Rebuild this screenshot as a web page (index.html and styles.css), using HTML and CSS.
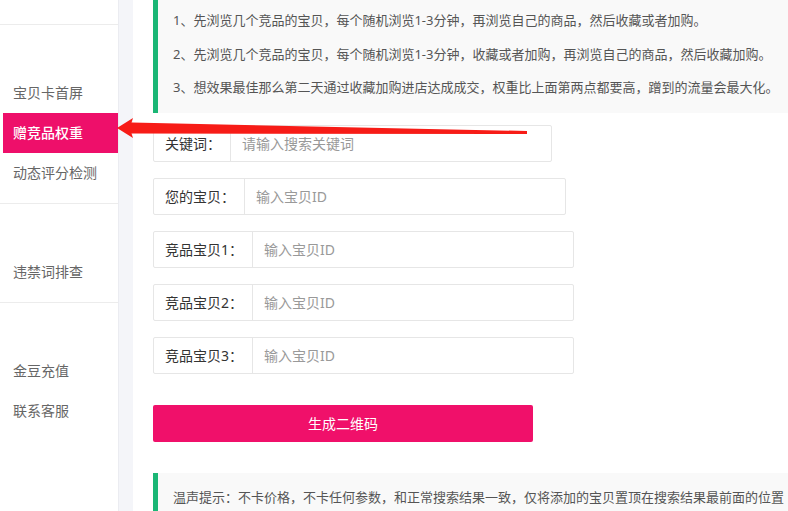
FILE: index.html
```html
<!DOCTYPE html>
<html lang="zh-CN">
<head>
<meta charset="utf-8">
<title>赠竞品权重</title>
<link rel="stylesheet" href="styles.css">
</head>
<body>
<div class="page">
  <aside class="sidebar">
    <div class="group group-top"></div>
    <div class="group">
      <div class="item">宝贝卡首屏</div>
      <div class="item active">赠竞品权重</div>
      <div class="item">动态评分检测</div>
    </div>
    <div class="group">
      <div class="item">违禁词排查</div>
    </div>
    <div class="group last">
      <div class="item">金豆充值</div>
      <div class="item">联系客服</div>
    </div>
  </aside>
  <div class="gutter"></div>
  <main class="main">
    <div class="notice">
      <p>1、先浏览几个竞品的宝贝，每个随机浏览1-3分钟，再浏览自己的商品，然后收藏或者加购。</p>
      <p>2、先浏览几个竞品的宝贝，每个随机浏览1-3分钟，收藏或者加购，再浏览自己的商品，然后收藏加购。</p>
      <p>3、想效果最佳那么第二天通过收藏加购进店达成成交，权重比上面第两点都要高，蹭到的流量会最大化。</p>
    </div>
    <form class="form">
      <div class="row"><span class="label">关键词：</span><input class="input" type="text" placeholder="请输入搜索关键词"></div>
      <div class="row"><span class="label">您的宝贝：</span><input class="input" type="text" placeholder="输入宝贝ID"></div>
      <div class="row"><span class="label">竞品宝贝1：</span><input class="input" type="text" placeholder="输入宝贝ID"></div>
      <div class="row"><span class="label">竞品宝贝2：</span><input class="input" type="text" placeholder="输入宝贝ID"></div>
      <div class="row"><span class="label">竞品宝贝3：</span><input class="input" type="text" placeholder="输入宝贝ID"></div>
      <button class="btn" type="button">生成二维码</button>
    </form>
    <div class="notice tip">
      <p>温声提示：不卡价格，不卡任何参数，和正常搜索结果一致，仅将添加的宝贝置顶在搜索结果最前面的位置</p>
    </div>
  </main>
  <svg class="arrow" width="788" height="511" viewBox="0 0 788 511" aria-hidden="true">
    <polygon points="117,128 133,118 131.5,122.5 527,131 527,134 131.5,133.5 133,138" fill="#f71c17"/>
  </svg>
</div>
</body>
</html>
```

FILE: styles.css
```css
* { box-sizing: border-box; }
html, body {
  margin: 0;
  padding: 0;
  background: #fff;
  font-family: "Noto Sans", "Noto Sans CJK SC", sans-serif;
}
.page {
  position: relative;
  display: flex;
  width: 788px;
  height: 511px;
  overflow: hidden;
}
.sidebar {
  width: 119px;
  flex: none;
  background: #fff;
  border-right: 1px solid #ebecf1;
}
.group {
  padding: 48px 0 10px;
  border-bottom: 1px solid #ececec;
}
.group-top {
  height: 25px;
  padding: 0;
}
.group.last { border-bottom: none; }
.item {
  height: 40px;
  line-height: 40px;
  padding-left: 13px;
  font-size: 14px;
  color: #666;
  white-space: nowrap;
}
.item.active {
  margin-left: 3px;
  padding-left: 10px;
  background: #ee0f6a;
  color: #fff;
  font-weight: 500;
}
.gutter {
  width: 14px;
  flex: none;
  background: #f4f5f9;
}
.main {
  flex: 1;
  min-width: 0;
  padding-left: 20px;
  overflow: hidden;
}
.notice {
  background: #f9f9f9;
  border-left: 5px solid #1ab675;
  padding: 4px 0 8px 15px;
  white-space: nowrap;
}
.notice p {
  margin: 0;
  line-height: 33.5px;
  font-size: 13px;
  color: #555;
}
.form {
  display: flex;
  flex-direction: column;
  align-items: flex-start;
  gap: 16px;
  padding-top: 12px;
}
.row {
  display: flex;
  height: 37px;
  border: 1px solid #e6e6e6;
  border-radius: 2px;
  background: #fff;
}
.label {
  display: flex;
  align-items: center;
  padding: 0 9px 0 11px;
  border-right: 1px solid #e6e6e6;
  font-size: 14px;
  color: #333;
  white-space: nowrap;
}
.input {
  width: 320px;
  border: none;
  outline: none;
  padding: 0 11px;
  font-family: inherit;
  font-size: 14px;
  color: #333;
  background: transparent;
}
.input::placeholder { color: #999; }
.btn {
  margin-top: 15px;
  width: 380px;
  height: 37px;
  border: none;
  border-radius: 2px;
  background: #f0106a;
  color: #fff;
  font-family: inherit;
  font-size: 14px;
  cursor: pointer;
}
.tip {
  margin-top: 31px;
  padding-top: 8px;
}
.arrow {
  position: absolute;
  left: 0;
  top: 0;
  pointer-events: none;
}
```
